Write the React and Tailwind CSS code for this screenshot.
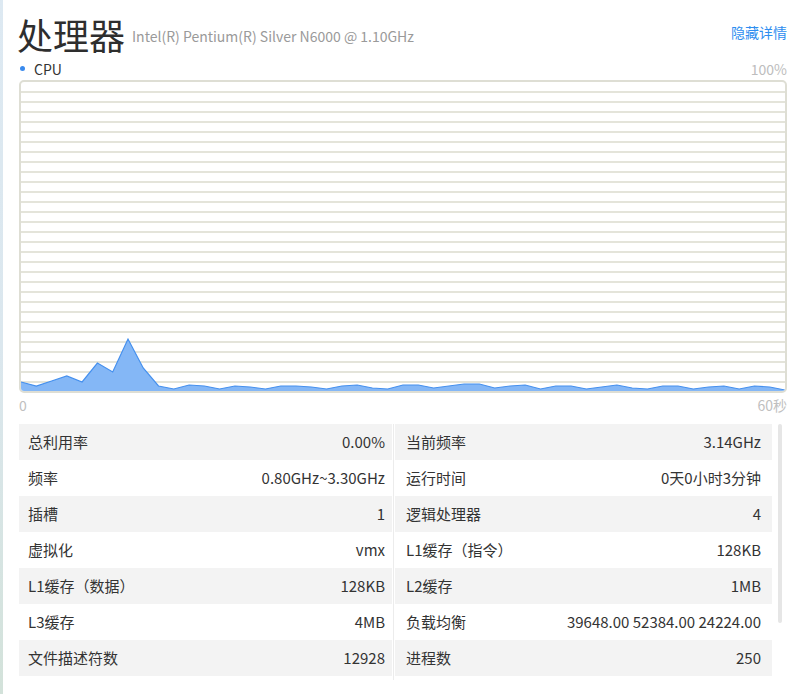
import React from 'react';

const font = { fontFamily: '"Noto Sans CJK SC", "Noto Sans", sans-serif' };

const heights = [
  10, 6, 11, 16, 10, 29, 20, 53, 24, 6, 3, 7, 6, 3, 6, 5, 3, 6, 6, 5, 3, 6, 7, 4, 3, 7, 7, 4, 6, 8, 8,
  4, 6, 7, 3, 6, 6, 3, 5, 7, 4, 3, 6, 6, 3, 5, 6, 3, 6, 5, 2,
];

const leftRows = [
  ['总利用率', '0.00%'],
  ['频率', '0.80GHz~3.30GHz'],
  ['插槽', '1'],
  ['虚拟化', 'vmx'],
  ['L1缓存（数据）', '128KB'],
  ['L3缓存', '4MB'],
  ['文件描述符数', '12928'],
];

const rightRows = [
  ['当前频率', '3.14GHz'],
  ['运行时间', '0天0小时3分钟'],
  ['逻辑处理器', '4'],
  ['L1缓存（指令）', '128KB'],
  ['L2缓存', '1MB'],
  ['负载均衡', '39648.00 52384.00 24224.00'],
  ['进程数', '250'],
];

function CpuChart() {
  const w = 764;
  const h = 309;
  const step = w / (heights.length - 1);
  const pts = heights.map((v, i) => [i * step, 310 - v]);
  const line = pts.map((p, i) => `${i === 0 ? 'M' : 'L'}${p[0].toFixed(1)} ${p[1]}`).join(' ');
  const area = `${line} L${w} ${h + 2} L0 ${h + 2} Z`;

  return (
    <div className="h-[313px] rounded-[5px] border-2 border-[#deded4] overflow-hidden">
      <svg width={w} height={h} viewBox={`0 0 ${w} ${h}`} className="block">
        {Array.from({ length: 30 }).map((_, k) => (
          <rect key={k} x="0" y={9 + k * 10} width={w} height="2" fill="#e4e4da" />
        ))}
        <path d={area} fill="#84b7f6" />
        <path d={line} fill="none" stroke="#4590ee" strokeWidth="1.2" />
      </svg>
    </div>
  );
}

function Row({ label, value, gray, right }) {
  return (
    <div
      className={`h-[36px] flex items-center justify-between text-[15px] text-[#333] ${
        gray ? 'bg-[#f3f3f3]' : 'bg-white'
      } ${right ? 'pl-[11px] pr-[11px]' : 'pl-[9px] pr-[7px]'}`}
    >
      <span>{label}</span>
      <span>{value}</span>
    </div>
  );
}

export default function App() {
  return (
    <div className="w-[801px] h-[694px] flex bg-white overflow-hidden" style={font}>
      <div className="w-[3px] h-full bg-gradient-to-b from-[#dde9f2] via-[#dbe7ee] to-[#d3e2da]" />
      <div className="flex-1 pl-[16px] pr-[14px] flex flex-col">
        <div className="flex items-center justify-between pt-[10px] h-[58px]">
          <div className="flex items-center gap-[7px] -ml-[2px]">
            <span className="text-[36px] leading-[44px] text-[#2e2e2e]">处理器</span>
            <span className="text-[14px] text-[#9a9a9a] mt-[5px]">Intel(R) Pentium(R) Silver N6000 @ 1.10GHz</span>
          </div>
          <span className="text-[14px] text-[#2e8ef0] -mt-[3px]">隐藏详情</span>
        </div>
        <div className="flex items-center justify-between h-[22px]">
          <div className="flex items-center">
            <span className="w-[5px] h-[5px] rounded-full bg-[#3a8aed] ml-[1px] mr-[9px] -mt-[2px]" />
            <span className="text-[14px] text-[#333]">CPU</span>
          </div>
          <span className="text-[14px] text-[#bdbdbd]">100%</span>
        </div>
        <CpuChart />
        <div className="flex items-center justify-between h-[24px] text-[14px] text-[#c0c0c0]">
          <span>0</span>
          <span>60秒</span>
        </div>
        <div className="flex mt-[7px]">
          <div className="w-[753px] flex">
            <div className="w-[373px] flex flex-col">
              {leftRows.map((r, i) => (
                <Row key={i} label={r[0]} value={r[1]} gray={i % 2 === 0} />
              ))}
            </div>
            <div className="w-[3px] flex justify-center">
              <div className="w-px h-[256px] bg-[#ececec]" />
            </div>
            <div className="flex-1 flex flex-col">
              {rightRows.map((r, i) => (
                <Row key={i} label={r[0]} value={r[1]} gray={i % 2 === 0} right />
              ))}
            </div>
          </div>
          <div className="ml-[6px] w-[4px] h-[199px] rounded-full bg-[#e6e6e6]" />
        </div>
      </div>
    </div>
  );
}
